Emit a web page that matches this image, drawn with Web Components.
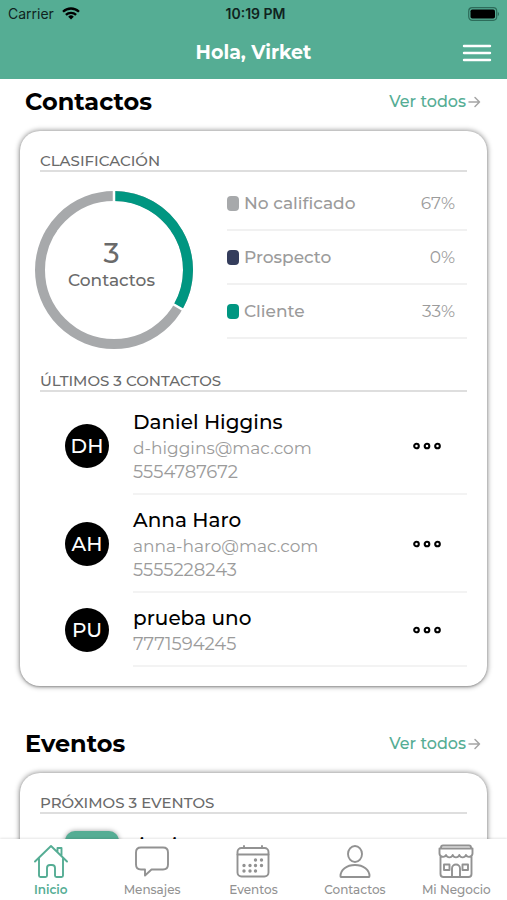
<!DOCTYPE html>
<html lang="es">
<head>
<meta charset="utf-8">
<meta name="viewport" content="width=device-width, initial-scale=1">
<title>Inicio</title>
<style>
  :root {
    --brand: #55ad94;
    --teal: #009681;
    --navy: #343d5c;
    --gray: #a7a9ab;
    --text-soft: #9b9b9b;
    --text-mid: #6a6a6a;
  }
  html, body { height: 100%; margin: 0; }
  body { background: #fff; color: #000; font-family: Montserrat, Inter, "Open Sans", sans-serif; }
</style>
</head>
<body>
<app-shell>
  <status-bar slot="top" carrier="Carrier" time="10:19 PM"></status-bar>
  <nav-header slot="top">Hola, Virket</nav-header>

  <dash-section heading="Contactos">
    <card-block heading="CLASIFICACIÓN">
      <class-chart total="3" label="Contactos">
        <legend-row value="67%" style="--chip: var(--gray)">No calificado</legend-row>
        <legend-row value="0%" style="--chip: var(--navy)">Prospecto</legend-row>
        <legend-row value="33%" style="--chip: var(--teal)">Cliente</legend-row>
      </class-chart>
    </card-block>
    <card-block heading="ÚLTIMOS 3 CONTACTOS">
      <contact-row initials="DH" name="Daniel Higgins" email="d-higgins@mac.com" phone="5554787672"></contact-row>
      <contact-row initials="AH" name="Anna Haro" email="anna-haro@mac.com" phone="5555228243"></contact-row>
      <contact-row initials="PU" name="prueba uno" phone="7771594245"></contact-row>
    </card-block>
  </dash-section>

  <dash-section heading="Eventos">
    <card-block heading="PRÓXIMOS 3 EVENTOS">
      <event-row>junio</event-row>
    </card-block>
  </dash-section>

  <tab-bar slot="bottom">
    <tab-item icon="home" current>Inicio</tab-item>
    <tab-item icon="chat">Mensajes</tab-item>
    <tab-item icon="calendar">Eventos</tab-item>
    <tab-item icon="person">Contactos</tab-item>
    <tab-item icon="store">Mi Negocio</tab-item>
  </tab-bar>
</app-shell>

<script>
const define = (name, render) => customElements.define(name, class extends HTMLElement {
  connectedCallback() {
    if (this.shadowRoot) return;
    this.attachShadow({ mode: 'open' }).innerHTML = render(this);
  }
});
const attr = (el, name) => el.getAttribute(name) || '';

define('app-shell', () => `
  <style>
    :host { display: flex; flex-direction: column; height: 100vh; }
    header { flex: none; background: var(--brand); }
    main { flex: 1; min-height: 0; overflow-y: auto; scrollbar-width: none; }
    main::-webkit-scrollbar { display: none; }
    footer { flex: none; }
  </style>
  <header><slot name="top"></slot></header>
  <main><slot></slot></main>
  <footer><slot name="bottom"></slot></footer>`);

define('status-bar', el => `
  <style>
    :host { display: grid; grid-template-columns: 1fr auto 1fr; align-items: center; padding: 0 8px;
            height: 27px; font: 400 14px/20px Inter, sans-serif; color: #10231e; }
    .left { display: flex; align-items: center; gap: 8px; }
    .time { font-weight: 600; padding-left: 4px; }
    .battery { justify-self: end; }
    svg { display: block; }
  </style>
  <span class="left"><span>${attr(el, 'carrier')}</span>
    <svg width="18" height="13" viewBox="0 0 18 13" fill="none" stroke="#000" stroke-width="2.3" aria-hidden="true">
      <path d="M1 4.8a11.4 11.4 0 0 1 16 0"/><path d="M3.9 7.9a7.2 7.2 0 0 1 10.2 0"/>
      <path d="M9 12.4 6.2 9.7a4 4 0 0 1 5.6 0z" fill="#000" stroke="none"/>
    </svg></span>
  <span class="time">${attr(el, 'time')}</span>
  <svg class="battery" width="32" height="14" viewBox="0 0 32 14" aria-hidden="true">
    <rect x="1.7" y=".7" width="28" height="12.6" rx="3.5" fill="none" stroke="#2d6c5a" stroke-width="1.2"/>
    <rect x="3.5" y="2.5" width="24.5" height="9" rx="1.8"/>
    <path d="M30.800 5v4c1.6-.5 1.6-3.500 0-4z" fill="#2d6c5a"/>
  </svg>`);

define('nav-header', () => `
  <style>
    :host { display: grid; grid-template-columns: 1fr auto 1fr; align-items: center; height: 52px; padding: 0 11px; }
    h1 { grid-column: 2; margin: 0; font-size: 19px; line-height: 28px; font-weight: 700; color: #fff; }
    button { justify-self: end; padding: 4px; border: 0; background: none; }
    svg { display: block; }
  </style>
  <h1><slot></slot></h1>
  <button type="button" aria-label="Menú">
    <svg width="30" height="20" viewBox="0 0 30 20" stroke="#fff" stroke-width="2.400" stroke-linecap="round">
      <path d="M2 3h26M2 10h26M2 17h26"/></svg>
  </button>`);

define('dash-section', el => `
  <style>
    :host { display: block; padding: 7px 20px 35px; }
    .head { display: flex; align-items: center; justify-content: space-between; padding: 0 6px 0 5px; margin-bottom: 13px; }
    h2 { margin: 0; font-size: 24px; line-height: 32px; font-weight: 700; }
    a { display: flex; align-items: center; gap: 2px; color: var(--brand); text-decoration: none;
        font-size: 16px; line-height: 24px; font-weight: 500; }
    svg { display: block; }
    .card { background: #fff; border-radius: 20px; padding-bottom: 19px; box-shadow: 0 0 5px 1px rgba(0,0,0,.38), 0 1px 2px rgba(0,0,0,.22); }
  </style>
  <div class="head">
    <h2>${attr(el, 'heading')}</h2>
    <a href="#">Ver todos
      <svg width="13" height="12" viewBox="0 0 13 12" fill="none" stroke="#a5a5a5" stroke-width="1.500" stroke-linecap="round" stroke-linejoin="round" aria-hidden="true">
        <path d="M1 6h10.500M7 1.500 11.500 6 7 10.500"/></svg></a>
  </div>
  <div class="card"><slot></slot></div>`);

define('card-block', el => `
  <style>
    :host { display: block; padding: 20px 20px 0; }
    h3 { margin: 0; border-bottom: 2px solid #dedede; color: var(--text-mid); font-size: 15px; line-height: 19px; font-weight: 500; }
    .body { padding-top: 5px; }
  </style>
  <h3>${attr(el, 'heading')}</h3>
  <div class="body"><slot></slot></div>`);

define('class-chart', el => `
  <style>
    :host { display: flex; justify-content: space-between; gap: 34px; }
    .donut { display: grid; flex: none; margin: 14px 0 2px -5px; }
    .donut > * { grid-area: 1 / 1; }
    svg { display: block; }
    .center { place-self: center; text-align: center; color: var(--text-mid); padding: 0 5px 10px 0; font-weight: 500; }
    .total { font-size: 28px; line-height: 30px; }
    .label { font-size: 17px; line-height: 24px; }
    .legend { flex: 1; }
  </style>
  <div class="donut">
    <svg width="158" height="158" viewBox="-79 -79 158 158" fill="none" stroke-width="10" aria-hidden="true">
      <circle r="74" stroke="var(--gray)"/>
      <path d="M0-74A74 74 0 0 1 64.09 37" stroke="var(--teal)"/>
      <path d="M0-67V-79M58 33.500 70 40.400" stroke="#fff" stroke-width="2.500"/>
    </svg>
    <div class="center"><div class="total">${attr(el, 'total')}</div><div class="label">${attr(el, 'label')}</div></div>
  </div>
  <div class="legend"><slot></slot></div>`);

define('legend-row', el => `
  <style>
    :host { display: flex; align-items: center; height: 52px; padding-right: 12px; border-bottom: 2px solid #f1f1f1;
            color: var(--text-soft); font-size: 17px; line-height: 24px; font-weight: 500; }
    i { width: 12px; height: 15px; margin-right: 5px; border-radius: 4px; background: var(--chip); }
    .name { flex: 1; }
    .value { font-weight: 400; }
  </style>
  <i></i><span class="name"><slot></slot></span><span class="value">${attr(el, 'value')}</span>`);

define('contact-row', el => `
  <style>
    :host { display: flex; align-items: stretch; gap: 24px; padding-left: 25px; }
    .avatar { flex: none; align-self: center; width: 44px; height: 44px; border-radius: 50%; background: #000; color: #fff;
              display: grid; place-items: center; font-size: 20px; font-weight: 500; }
    .body { flex: 1; min-width: 0; display: flex; align-items: center; justify-content: space-between;
            padding: 11px 18px 9px 0; border-bottom: 2px solid #f3f3f3; }
    .name { font-size: 20px; line-height: 28px; font-weight: 500; }
    .line { font-size: 17px; line-height: 24px; color: var(--text-soft); }
    .phone { font-size: 18px; }
    button { width: 44px; height: 44px; padding: 0; border: 0; background: none; display: grid; place-items: center; }
    svg { display: block; }
  </style>
  <span class="avatar">${attr(el, 'initials')}</span>
  <div class="body">
    <div>
      <div class="name">${attr(el, 'name')}</div>
      ${attr(el, 'email') ? `<div class="line">${attr(el, 'email')}</div>` : ''}
      <div class="line phone">${attr(el, 'phone')}</div>
    </div>
    <button type="button" aria-label="Opciones de ${attr(el, 'name')}">
      <svg width="28" height="8" viewBox="0 0 28 8" fill="none" stroke="#000" stroke-width="2.100">
        <circle cx="3.500" cy="4" r="2.300"/><circle cx="14" cy="4" r="2.300"/><circle cx="24.500" cy="4" r="2.300"/></svg>
    </button>
  </div>`);

define('event-row', () => `
  <style>
    :host { display: flex; gap: 20px; padding: 12px 0 0 25px; }
    .badge { width: 54px; height: 60px; border-radius: 10px; background: var(--brand); box-shadow: 0 0 5px rgba(0,0,0,.4); }
    .name { font-size: 20px; line-height: 28px; font-weight: 500; }
  </style>
  <span class="badge"></span><span class="name"><slot></slot></span>`);

define('tab-bar', () => `
  <style>
    :host { display: block; background: #fff; box-shadow: 0 -1px 2px rgba(0,0,0,.1); position: relative; }
    nav { display: grid; grid-template-columns: repeat(5, 1fr); }
  </style>
  <nav><slot></slot></nav>`);

const icons = {
  home: `<path d="M2 18.500 18 3l16 15.500M6 15v17.500q0 1.500 1.500 1.500h5q1.500 0 1.500-1.500V25q0-3 3-3h2q3 0 3 3v7.500q0 1.500 1.500 1.500h5q1.500 0 1.500-1.500V15M24.500 9V5h4v8"/>`,
  chat: `<path d="M7 4.500h22q5 0 5 5v12q0 5-5 5H17.500L11 32.500V26.500H7q-5 0-5-5v-12q0-5 5-5z"/>`,
  calendar: `<rect x="2.500" y="5" width="31" height="28.500" rx="4"/><path d="M2.500 11.500h31M9 3v2M27 3v2"/>
    <path stroke-width="3.400" stroke-linecap="round" d="M20.500 17h0M26.500 17h0M9 22.500h0M15 22.500h0M20.500 22.500h0M26.500 22.500h0M9 28h0M15 28h0M20.500 28h0"/>`,
  person: `<ellipse cx="18" cy="11" rx="7" ry="8"/><path d="M4 34q-.5 0-.5-1c0-6 6-11 14.500-11s14.500 5 14.500 11q0 1-.5 1z"/>`,
  store: `<path d="M3 4.500q0-2 2-2h26q2 0 2 2M1.500 5.500h33M1.500 5.500v5a3.500 3.500 0 0 0 6.600 1.500 3.500 3.500 0 0 0 6.600 0 3.500 3.500 0 0 0 6.600 0 3.500 3.500 0 0 0 6.600 0 3.500 3.500 0 0 0 6.600-1.500v-5M2.500 14v17q0 3 3 3h25q3 0 3-3V14"/>
    <rect x="6" y="21.500" width="5.500" height="5.500"/><rect x="24.500" y="21.500" width="5.500" height="5.500"/><path d="M14 34v-8.500a4 4 0 0 1 8 0V34"/>`
};

define('tab-item', el => `
  <style>
    :host { display: block; min-width: 0; }
    a { display: flex; flex-direction: column; align-items: center; padding: 4px 0 2px; text-decoration: none;
        color: #929292; font-size: 12px; line-height: 16px; font-weight: 500; gap: 3px; }
    :host([current]) a { color: var(--brand); font-weight: 600; }
    svg { display: block; }
  </style>
  <a href="#">
    <svg width="36" height="36" viewBox="0 0 36 36" fill="none" stroke="currentColor" stroke-width="1.900" stroke-linejoin="round" stroke-linecap="round" aria-hidden="true">${icons[attr(el, 'icon')]}</svg>
    <span><slot></slot></span>
  </a>`);
</script>
</body>
</html>
